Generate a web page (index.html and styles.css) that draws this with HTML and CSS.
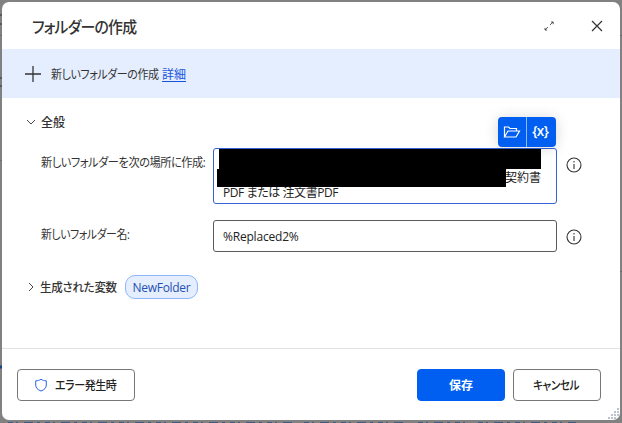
FILE: index.html
```html
<!DOCTYPE html>
<html lang="ja">
<head>
    <meta charset="UTF-8">
    <title>フォルダーの作成</title>
    <link rel="stylesheet" href="styles.css">
</head>
<body>
    <svg class="backdrop" width="622" height="423" viewBox="0 0 622 423">
        <path d="M0 15h2M0 24h2M0 78h2M0 86h2" stroke="#333"/>
        <path d="M0 35.500h2M0 160.500h2M620 35.500h2M620 271.500h2" stroke="#696b6e"/>
        <path d="M0 367h2" stroke="#174489" stroke-width="3"/>
        <path d="M8 422.500h285M304 422.500h102M418 422.500h50M478 422.500h98" stroke="#3d5a83" stroke-dasharray="5 3 2 6 9 4 3 5"/>
    </svg>
    <div class="dialog">
        <div class="header">
            <h2 class="title"><span class="text">フォルダーの作成</span></h2>
            <svg class="expand" width="12" height="12" viewBox="0 0 12 12">
                <path d="M7 5l3-3M8 2h2.200v2.200M5 7l-3 3M2 7.800V10h2.200"/>
            </svg>
            <svg class="close" width="12" height="12" viewBox="0 0 12 12">
                <path d="M1 1l10 10M11 1L1 11"/>
            </svg>
        </div>
        <div class="banner">
            <svg class="plus" width="16" height="16" viewBox="0 0 16 16">
                <path d="M8 0v16M0 8h16"/>
            </svg>
            <span class="banner-text"><span class="text">新しいフォルダーの作成</span></span>
            <a class="link" href="#">詳細</a>
        </div>
        <div class="content">
            <div class="section">
                <svg class="chevron" width="10" height="10" viewBox="0 0 10 10"><path d="M1 3l4 4 4-4"/></svg>
                <span class="section-title">全般</span>
            </div>
            <div class="field">
                <label class="label label-place"><span class="text">新しいフォルダーを次の場所に作成:</span></label>
                <div class="input path-input">
                    <div class="line"><span class="mask mask-top"></span></div>
                    <div class="line"><span class="mask mask-bottom"></span><span class="path-end">契約書</span></div>
                    <div class="line line-last">PDF または 注文書PDF</div>
                    <div class="tools">
                        <span class="tool">
                            <svg width="18" height="14" viewBox="0 0 18 14"><path d="M1.500 12V2h4l1.500 1.500h6.500V6M1.500 12L5 6h11.500L13 12z"/></svg>
                        </span>
                        <span class="tool tool-var">{x}</span>
                    </div>
                </div>
                <svg class="info" width="16" height="16" viewBox="0 0 16 16"><circle cx="8" cy="8" r="7"/><path d="M8 7v5M8 4v1.500"/></svg>
            </div>
            <div class="field field-name">
                <label class="label label-name"><span class="text">新しいフォルダー名:</span></label>
                <div class="input name-input">%Replaced2%</div>
                <svg class="info" width="16" height="16" viewBox="0 0 16 16"><circle cx="8" cy="8" r="7"/><path d="M8 7v5M8 4v1.500"/></svg>
            </div>
            <div class="section variables">
                <svg class="chevron" width="10" height="10" viewBox="0 0 10 10"><path d="M3 1l4 4-4 4"/></svg>
                <span class="section-title vars-title"><span class="text">生成された変数</span></span>
                <span class="chip">NewFolder</span>
            </div>
        </div>
        <div class="footer">
            <button class="button error-button">
                <svg width="14" height="14" viewBox="0 0 14 14"><path d="M7 1.200C5.500 2.300 3.800 2.800 1.700 2.800V7c0 2.800 1.800 4.700 5.300 6 3.500-1.300 5.300-3.200 5.300-6V2.800C10.200 2.800 8.500 2.300 7 1.200z"/></svg>
                <span class="text">エラー発生時</span>
            </button>
            <button class="button save-button">保存</button>
            <button class="button cancel-button"><span class="text">キャンセル</span></button>
        </div>
        <svg class="grip" width="12" height="12" viewBox="0 0 12 12">
            <path d="M9 1h2M6 4h2M9 4h2M3 7h2M6 7h2M9 7h2M0 10h2M3 10h2M6 10h2"/>
        </svg>
    </div>
</body>
</html>
```
FILE: styles.css
```css
* {
    box-sizing: border-box;
}
body {
    margin: 0;
    height: 423px;
    padding: 2px;
    overflow: hidden;
    background: #818181;
    font-family: "Open Sans", "Noto Sans CJK JP", sans-serif;
    font-size: 12px;
    font-feature-settings: "palt";
    color: #333;
}
svg {
    fill: none;
    stroke: #333;
    flex: none;
}
/* condensed kana text */
.text {
    display: inline-block;
    white-space: nowrap;
    letter-spacing: -0.5px;
    transform-origin: left center;
}
.backdrop {
    position: absolute;
    left: 0;
    top: 0;
}
.dialog {
    position: relative;
    display: flex;
    flex-direction: column;
    width: 618px;
    height: 418px;
    background: #fff;
    border-radius: 7px;
    overflow: hidden;
}
.header {
    display: flex;
    align-items: center;
    height: 47px;
    padding: 0 15px 0 30px;
}
.title {
    flex: 1;
    margin: 0;
    font-size: 16px;
    font-weight: 500;
}
.title .text {
    letter-spacing: -0.8px;
    transform: scaleX(0.93);
}
.expand {
    margin-right: 36px;
    stroke-width: 0.8;
}
.close {
    margin-right: 2px;
    stroke-width: 1.2;
}
.banner {
    display: flex;
    align-items: center;
    height: 49px;
    padding-left: 23px;
    background: #e5eefe;
}
.plus {
    margin-right: 10px;
    stroke-width: 1.3;
}
.banner-text {
    width: 111px;
}
.banner-text .text {
    transform: scaleX(0.92);
}
.link {
    color: #1653df;
    text-underline-offset: 2px;
}
.content {
    flex: 1;
    padding: 13px 0 0 24px;
}
.section {
    display: flex;
    align-items: center;
    height: 22px;
}
.chevron {
    margin-right: 5px;
    stroke-width: 0.9;
}
.section-title {
    font-weight: 500;
}
.field {
    display: flex;
    height: 56px;
    margin-top: 15px;
    padding-left: 15px;
}
.label {
    width: 172px;
    padding-top: 6px;
    line-height: 18px;
}
.label-place .text {
    transform: scaleX(0.935);
}
.label-name .text {
    transform: scaleX(0.91);
}
.input {
    position: relative;
    width: 344px;
    border: 1px solid #5b5b5b;
    border-radius: 3px;
    color: #222;
}
.path-input {
    height: 56px;
    border-color: #3563d5;
}
.line {
    display: flex;
    height: 18px;
    line-height: 17px;
    padding-left: 3px;
}
.line:first-child {
    height: 20px;
    padding-left: 5px;
}
.line-last {
    height: 15px;
    line-height: 11px;
    padding-left: 9px;
    letter-spacing: -0.42px;
}
.mask {
    background: #000;
}
.mask-top {
    width: 322px;
    height: 20px;
}
.mask-bottom {
    width: 289px;
    height: 18px;
}
.path-end {
    margin-left: -1px;
}
.tools {
    position: absolute;
    right: 0;
    top: -32px;
    display: flex;
    width: 58px;
    height: 30px;
    border-radius: 4px;
    background: #005ff0;
    box-shadow: 0 1px 14px rgba(0, 0, 0, 0.16);
}
.tool {
    display: flex;
    flex: 1;
    align-items: center;
    justify-content: center;
    color: #fff;
}
.tool svg {
    stroke: #fff;
    stroke-width: 1.2;
}
.tool-var {
    padding: 0 2px 2px 0;
    border-left: 1px solid #8db8ff;
    font-size: 13.5px;
    font-weight: 600;
    letter-spacing: -0.6px;
}
.info {
    margin: 9px 0 0 9px;
    stroke-width: 1.1;
}
.field-name {
    height: 32px;
    margin-top: 16px;
}
.name-input {
    height: 32px;
    padding-left: 9px;
    line-height: 32px;
    font-weight: 500;
    letter-spacing: -0.2px;
}
.variables {
    height: 24px;
    margin-top: 23px;
}
.vars-title {
    width: 85px;
    margin-left: -1px;
}
.vars-title .text {
    letter-spacing: -0.3px;
    transform: scaleX(0.96);
}
.chip {
    width: 73px;
    height: 24px;
    border: 1px solid #8db5fa;
    border-radius: 10px;
    background: #e5eefe;
    color: #2450ae;
    line-height: 23px;
    text-align: center;
    letter-spacing: -0.3px;
}
.footer {
    display: flex;
    height: 72px;
    padding: 20px 19px 0 15px;
    border-top: 1px solid #e2e2e2;
}
.button {
    display: flex;
    align-items: center;
    justify-content: center;
    width: 88px;
    height: 32px;
    padding: 0;
    border: 1px solid #777;
    border-radius: 4px;
    background: #fff;
    color: #222;
    font: 500 12px "Open Sans", "Noto Sans CJK JP", sans-serif;
    font-feature-settings: "palt";
}
.error-button {
    justify-content: flex-start;
    width: 118px;
    margin-right: auto;
    padding-left: 16px;
    gap: 7px;
}
.error-button .text {
    transform: scaleX(0.92);
}
.error-button svg {
    stroke: #2864e8;
}
.save-button {
    margin-right: 8px;
    border-color: #005ff0;
    background: #005ff0;
    color: #fff;
    font-weight: 700;
}
.cancel-button {
    justify-content: flex-start;
    padding-left: 19px;
}
.cancel-button .text {
    transform: scaleX(0.89);
}
.grip {
    position: absolute;
    right: 0;
    bottom: 0;
    stroke: #a5afbd;
    stroke-width: 1.5;
}
```
